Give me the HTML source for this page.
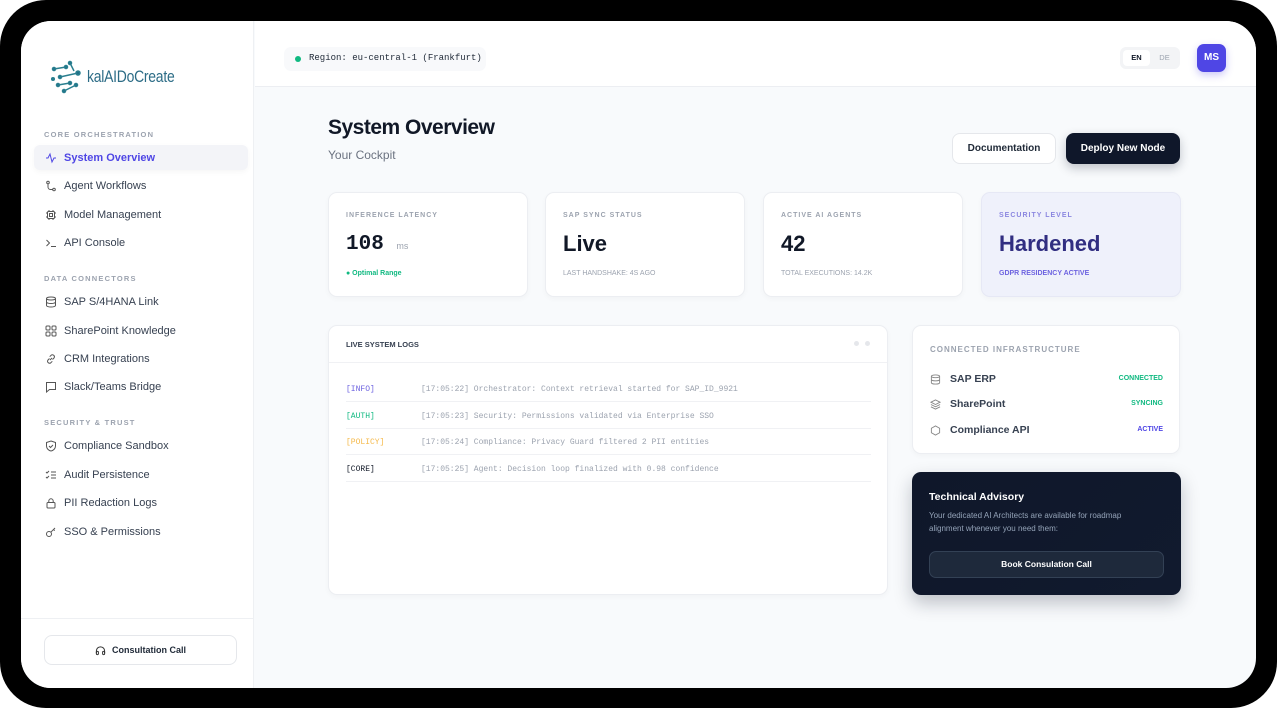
<!DOCTYPE html>
<html><head><meta charset="utf-8"><style>
*{box-sizing:border-box;margin:0;padding:0}
body{width:1277px;height:722px;background:#fff;font-family:"Liberation Sans",sans-serif;position:relative;overflow:hidden;color:#111827}
.frame{position:absolute;left:0;top:0;width:1277px;height:708px;background:#000;border-radius:46px}
.screen{position:absolute;left:21px;top:21px;width:1235px;height:667px;background:#f8fafc;border-radius:30px;overflow:hidden}
.side{position:absolute;left:0;top:0;width:233px;height:667px;background:#fff;border-right:1px solid #eef0f3}
.a{position:absolute}
.sec{position:absolute;left:23px;font-size:7.5px;letter-spacing:1.2px;color:#9ca3af;font-weight:bold}
.it{position:absolute;left:13px;width:214px;height:25px;font-size:11px;color:#374151;display:flex;align-items:center;padding-left:30px;border-radius:6px}
.it svg{position:absolute;left:11px;top:7px}
.it.act{background:#f3f4f8;color:#4f46e5;font-weight:bold;box-shadow:0 2px 6px rgba(0,0,0,.04)}
.card{position:absolute;background:#fff;border:1px solid #eceef2;border-radius:9px;box-shadow:0 2px 6px rgba(0,0,0,.03)}
.lbl{position:absolute;left:17px;top:19px;font-size:7px;letter-spacing:1px;color:#9ca3af;font-weight:bold}
.big{position:absolute;left:17px;top:38px;font-size:22px;font-weight:bold}
.sub{position:absolute;left:17px;top:77px;font-size:7px;color:#9ca3af}
.mono{font-family:"Liberation Mono",monospace}
.log{position:absolute;left:17px;width:525px;height:26px;border-bottom:1px solid #f0f1f4;font-size:8px;font-family:"Liberation Mono",monospace;color:#9ca3af}
.log b{position:absolute;left:0;top:9px;font-weight:normal}
.log span{position:absolute;left:75px;top:9px}
.inf{position:absolute;left:17px;width:233px;font-size:10.5px;font-weight:bold;color:#374151;padding-left:20px}
.inf i{position:absolute;right:0;top:2px;font-style:normal;font-size:7px}
</style></head><body>
<div class="frame"></div>
<div class="screen">
 <div class="side">
  <svg class="a" style="left:29px;top:38px" width="36" height="36" viewBox="0 0 36 36"><g stroke="#2a7f8f" stroke-width="1.5" fill="#1f6e88"><line x1="4" y1="10" x2="16" y2="8"/><line x1="10" y1="18" x2="28" y2="14"/><line x1="8" y1="26" x2="20" y2="24"/><line x1="14" y1="32" x2="26" y2="26"/><line x1="20" y1="4" x2="24" y2="12"/><circle cx="4" cy="10" r="1.5"/><circle cx="16" cy="8" r="1.5"/><circle cx="20" cy="4" r="1.5"/><circle cx="28" cy="14" r="2"/><circle cx="10" cy="18" r="1.5"/><circle cx="3" cy="20" r="1.3"/><circle cx="8" cy="26" r="1.5"/><circle cx="20" cy="24" r="1.5"/><circle cx="14" cy="32" r="1.5"/><circle cx="26" cy="26" r="1.5"/></g></svg>
  <div class="a" style="left:66px;top:46px;font-size:17px;color:#2c6c86;letter-spacing:-0.3px;transform:scaleX(0.82);transform-origin:left">kalAIDoCreate</div>
  <div class="sec" style="top:109px">CORE ORCHESTRATION</div>
  <div class="it act" style="top:124px"><svg width="12" height="12" viewBox="0 0 12 12" fill="none" stroke="#4f46e5" stroke-width="1"><path d="M1 6h2l2-4 2 8 2-4h2"/></svg>System Overview</div>
  <div class="it" style="top:152px"><svg width="12" height="12" viewBox="0 0 12 12" fill="none" stroke="#555" stroke-width="1"><circle cx="3" cy="2.5" r="1.3"/><circle cx="9" cy="9.5" r="1.3"/><path d="M3 4v3a2.5 2.5 0 0 0 2.5 2.5H7.7"/></svg>Agent Workflows</div>
  <div class="it" style="top:181px"><svg width="12" height="12" viewBox="0 0 12 12" fill="none" stroke="#555" stroke-width="1"><rect x="2.5" y="2.5" width="7" height="7" rx="1"/><rect x="4.5" y="4.5" width="3" height="3"/><path d="M4 1v1.5M8 1v1.5M4 9.5V11M8 9.5V11M1 4h1.5M1 8h1.5M9.5 4H11M9.5 8H11"/></svg>Model Management</div>
  <div class="it" style="top:209px"><svg width="12" height="12" viewBox="0 0 12 12" fill="none" stroke="#555" stroke-width="1"><path d="M1.5 3l3 3-3 3M6 9.5h5"/></svg>API Console</div>
  <div class="sec" style="top:253px">DATA CONNECTORS</div>
  <div class="it" style="top:268px"><svg width="12" height="12" viewBox="0 0 12 12" fill="none" stroke="#555" stroke-width="1"><ellipse cx="6" cy="2.5" rx="4.5" ry="1.5"/><path d="M1.5 2.5v7c0 .8 2 1.5 4.5 1.5s4.5-.7 4.5-1.5v-7M1.5 6c0 .8 2 1.5 4.5 1.5S10.5 6.8 10.5 6"/></svg>SAP S/4HANA Link</div>
  <div class="it" style="top:297px"><svg width="12" height="12" viewBox="0 0 12 12" fill="none" stroke="#555" stroke-width="1"><rect x="1" y="1" width="4" height="4" rx="1"/><rect x="7" y="1" width="4" height="4" rx="1"/><rect x="1" y="7" width="4" height="4" rx="1"/><rect x="7" y="7" width="4" height="4" rx="1"/></svg>SharePoint Knowledge</div>
  <div class="it" style="top:325px"><svg width="12" height="12" viewBox="0 0 12 12" fill="none" stroke="#555" stroke-width="1"><path d="M5 7l2-2M4.5 5.5L3 7a2 2 0 0 0 2.8 2.8L7.3 8.3M7.5 6.5L9 5a2 2 0 0 0-2.8-2.8L4.7 3.7"/></svg>CRM Integrations</div>
  <div class="it" style="top:353px"><svg width="12" height="12" viewBox="0 0 12 12" fill="none" stroke="#555" stroke-width="1"><path d="M1.5 1.5h9v7h-6l-3 2.5z"/></svg>Slack/Teams Bridge</div>
  <div class="sec" style="top:397px">SECURITY &amp; TRUST</div>
  <div class="it" style="top:412px"><svg width="12" height="12" viewBox="0 0 12 12" fill="none" stroke="#555" stroke-width="1"><path d="M6 1l4.5 1.5v3.5c0 2.5-2 4.5-4.5 5-2.5-.5-4.5-2.5-4.5-5V2.5z"/><path d="M4 6l1.5 1.5L8 5"/></svg>Compliance Sandbox</div>
  <div class="it" style="top:441px"><svg width="12" height="12" viewBox="0 0 12 12" fill="none" stroke="#555" stroke-width="1"><path d="M1 3l1 1 2-2M1 8l1 1 2-2M6 3h5M6 6h5M6 9h5"/></svg>Audit Persistence</div>
  <div class="it" style="top:469px"><svg width="12" height="12" viewBox="0 0 12 12" fill="none" stroke="#555" stroke-width="1"><rect x="2" y="5.5" width="8" height="5.5" rx="1"/><path d="M3.8 5.5V4a2.2 2.2 0 0 1 4.4 0v1.5"/></svg>PII Redaction Logs</div>
  <div class="it" style="top:498px"><svg width="12" height="12" viewBox="0 0 12 12" fill="none" stroke="#555" stroke-width="1"><circle cx="4" cy="8" r="2.5"/><path d="M5.8 6.2L10 2M8.5 3.5l1.2 1.2"/></svg>SSO &amp; Permissions</div>
  <div class="a" style="left:0;top:597px;width:233px;border-top:1px solid #eef0f3"></div>
  <div class="a" style="left:23px;top:614px;width:193px;height:30px;border:1px solid #e5e7eb;border-radius:8px;background:#fff;font-size:9px;font-weight:bold;color:#1f2937;display:flex;align-items:center;justify-content:center;gap:6px"><svg width="11" height="11" viewBox="0 0 12 12" fill="none" stroke="#333" stroke-width="1.1"><path d="M1.5 9V6.5a4.5 4.5 0 0 1 9 0V9"/><rect x="1.5" y="7" width="2.2" height="3.5" rx=".8"/><rect x="8.3" y="7" width="2.2" height="3.5" rx=".8"/></svg>Consultation Call</div>
 </div>
 <div class="a" style="left:234px;top:0;width:1001px;height:66px;background:#fff;border-bottom:1px solid #eceef2"></div>
 <div class="a mono" style="left:263px;top:26px;width:202px;height:24px;background:#f8f9fb;border-radius:7px;font-size:9px;color:#1f2937;padding:6px 0 0 25px">Region: eu-central-1 (Frankfurt)<span class="a" style="left:11px;top:9px;width:6px;height:6px;border-radius:50%;background:#10b981"></span></div>
 <div class="a" style="left:1099px;top:26px;width:60px;height:22px;background:#f3f4f6;border-radius:6px"></div>
 <div class="a" style="left:1102px;top:29px;width:27px;height:16px;background:#fff;border-radius:4px;font-size:7.5px;font-weight:bold;text-align:center;line-height:16px">EN</div>
 <div class="a" style="left:1131px;top:29px;width:25px;height:16px;font-size:7.5px;color:#9ca3af;text-align:center;line-height:16px">DE</div>
 <div class="a" style="left:1176px;top:23px;width:29px;height:28px;background:#4f46e5;border-radius:7px;color:#fff;font-size:10px;font-weight:bold;text-align:center;line-height:28px;box-shadow:0 3px 8px rgba(79,70,229,.3)">MS</div>

 <div class="a" style="left:307px;top:95px;font-size:21px;font-weight:bold;letter-spacing:-0.5px">System Overview</div>
 <div class="a" style="left:307px;top:127px;font-size:12px;color:#6b7280">Your Cockpit</div>
 <div class="a" style="left:931px;top:112px;width:104px;height:31px;background:#fff;border:1px solid #e5e7eb;border-radius:8px;font-size:10px;font-weight:bold;color:#1f2937;text-align:center;line-height:29px">Documentation</div>
 <div class="a" style="left:1045px;top:112px;width:114px;height:31px;background:#0f172a;border-radius:8px;font-size:10px;font-weight:bold;color:#fff;text-align:center;line-height:31px;box-shadow:0 4px 10px rgba(15,23,42,.25)">Deploy New Node</div>

 <div class="card" style="left:307px;top:171px;width:200px;height:105px"><div class="lbl">INFERENCE LATENCY</div><div class="big mono" style="font-size:21px;top:40px">108 <span style="font-family:'Liberation Sans';font-size:9px;color:#9ca3af;font-weight:normal">ms</span></div><div class="sub" style="color:#10b981;font-weight:bold">● Optimal Range</div></div>
 <div class="card" style="left:524px;top:171px;width:200px;height:105px"><div class="lbl">SAP SYNC STATUS</div><div class="big">Live</div><div class="sub">LAST HANDSHAKE: 4S AGO</div></div>
 <div class="card" style="left:742px;top:171px;width:200px;height:105px"><div class="lbl">ACTIVE AI AGENTS</div><div class="big">42</div><div class="sub">TOTAL EXECUTIONS: 14.2K</div></div>
 <div class="card" style="left:960px;top:171px;width:200px;height:105px;background:#eff1fb;border-color:#e6e8f5"><div class="lbl" style="color:#8b87e0">SECURITY LEVEL</div><div class="big" style="color:#312e81">Hardened</div><div class="sub" style="color:#6d63e0;font-weight:bold">GDPR RESIDENCY ACTIVE</div></div>

 <div class="card" style="left:307px;top:304px;width:560px;height:270px">
  <div class="a" style="left:17px;top:14px;font-size:7.5px;font-weight:bold;color:#374151">LIVE SYSTEM LOGS</div>
  <div class="a" style="left:525px;top:15px;width:5px;height:5px;border-radius:50%;background:#e5e7eb"></div>
  <div class="a" style="left:536px;top:15px;width:5px;height:5px;border-radius:50%;background:#e5e7eb"></div>
  <div class="a" style="left:0;top:36px;width:558px;border-top:1px solid #f0f1f4"></div>
  <div class="log" style="top:50px"><b style="color:#6d63e0">[INFO]</b><span>[17:05:22] Orchestrator: Context retrieval started for SAP_ID_9921</span></div>
  <div class="log" style="top:77px"><b style="color:#10b981">[AUTH]</b><span>[17:05:23] Security: Permissions validated via Enterprise SSO</span></div>
  <div class="log" style="top:103px"><b style="color:#f5b94a">[POLICY]</b><span>[17:05:24] Compliance: Privacy Guard filtered 2 PII entities</span></div>
  <div class="log" style="top:130px"><b style="color:#111827">[CORE]</b><span>[17:05:25] Agent: Decision loop finalized with 0.98 confidence</span></div>
 </div>

 <div class="card" style="left:891px;top:304px;width:268px;height:129px">
  <div class="a" style="left:17px;top:19px;font-size:8px;letter-spacing:1px;font-weight:bold;color:#9ca3af">CONNECTED INFRASTRUCTURE</div>
  <div class="inf" style="top:47px"><svg class="a" style="left:0;top:1px" width="11" height="11" viewBox="0 0 12 12" fill="none" stroke="#888" stroke-width="1"><ellipse cx="6" cy="2.5" rx="4.5" ry="1.5"/><path d="M1.5 2.5v7c0 .8 2 1.5 4.5 1.5s4.5-.7 4.5-1.5v-7M1.5 6c0 .8 2 1.5 4.5 1.5S10.5 6.8 10.5 6"/></svg>SAP ERP<i style="color:#10b981">CONNECTED</i></div>
  <div class="inf" style="top:72px"><svg class="a" style="left:0;top:1px" width="11" height="11" viewBox="0 0 12 12" fill="none" stroke="#888" stroke-width="1"><path d="M6 1l5 2.5-5 2.5-5-2.5zM1 6l5 2.5L11 6M1 8.5L6 11l5-2.5"/></svg>SharePoint<i style="color:#10b981">SYNCING</i></div>
  <div class="inf" style="top:98px"><svg class="a" style="left:0;top:1px" width="11" height="11" viewBox="0 0 12 12" fill="none" stroke="#888" stroke-width="1"><path d="M6 1l4.5 2.5v5L6 11 1.5 8.5v-5z"/></svg>Compliance API<i style="color:#4f46e5">ACTIVE</i></div>
 </div>

 <div class="a" style="left:891px;top:451px;width:269px;height:123px;background:linear-gradient(135deg,#0f172a,#111a2e);border-radius:9px;box-shadow:0 8px 18px rgba(15,23,42,.25)">
  <div class="a" style="left:17px;top:19px;font-size:10.5px;font-weight:bold;color:#fff">Technical Advisory</div>
  <div class="a" style="left:17px;top:37px;width:212px;font-size:8px;line-height:13px;color:#94a3b8">Your dedicated AI Architects are available for roadmap alignment whenever you need them:</div>
  <div class="a" style="left:17px;top:79px;width:235px;height:27px;background:#1e293b;border:1px solid #334155;border-radius:7px;color:#fff;font-size:8.5px;font-weight:bold;text-align:center;line-height:25px">Book Consulation Call</div>
 </div>
</div>
</body></html>
